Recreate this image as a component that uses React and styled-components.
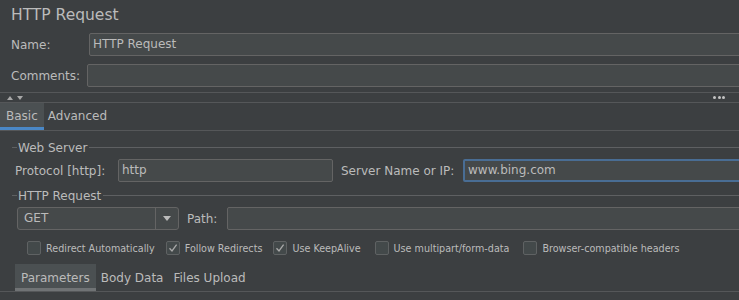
import React from "react";
import styled, { createGlobalStyle } from "styled-components";

const Global = createGlobalStyle`
  html, body { margin: 0; padding: 0; background: #3c3f41; }
  body { width: 739px; height: 300px; overflow: hidden; font-family: "DejaVu Sans", sans-serif; color: #bbbbbb; }
  * { box-sizing: border-box; }
`;

const Page = styled.div`
  width: 739px;
  height: 300px;
  overflow: hidden;
  display: flex;
  flex-direction: column;
`;

const Title = styled.div`
  height: 33px;
  padding: 5px 0 0 11px;
  font-size: 15.5px;
  line-height: 20px;
  color: #bbbbbb;
`;

const Row = styled.div`
  display: flex;
  align-items: center;
  height: ${(p) => p.$h || 23}px;
  margin-top: ${(p) => p.$mt || 0}px;
  padding-left: ${(p) => p.$pl || 0}px;
`;

const Label = styled.div`
  width: ${(p) => p.$w}px;
  flex: none;
  font-size: 12px;
  white-space: nowrap;
  color: #bbbbbb;
`;

const Input = styled.div`
  height: 23px;
  width: ${(p) => (p.$w ? `${p.$w}px` : "auto")};
  flex: ${(p) => (p.$w ? "none" : "1")};
  margin-right: ${(p) => (p.$w ? 0 : -6)}px;
  background: #45494a;
  border: ${(p) => (p.$focus ? "2px solid #496d94" : "1px solid #646464")};
  border-radius: 2px;
  font-size: 12px;
  line-height: ${(p) => (p.$focus ? 19 : 21)}px;
  padding-left: 3px;
  color: #bbbbbb;
  white-space: nowrap;
`;

const Divider = styled.div`
  height: 1px;
  background: #555759;
  margin-top: ${(p) => p.$mt || 0}px;
`;

const Splitter = styled.div`
  height: 9px;
  display: flex;
  align-items: center;
  padding: 0 0 0 7px;
`;

const Arrow = styled.span`
  width: 0;
  height: 0;
  border-left: 3.5px solid transparent;
  border-right: 3.5px solid transparent;
  ${(p) =>
    p.$up
      ? "border-bottom: 4px solid #a8a8a8;"
      : "border-top: 4px solid #a8a8a8;"}
  margin-right: ${(p) => p.$mr || 0}px;
`;

const Dots = styled.div`
  margin-left: auto;
  margin-right: 14px;
  display: flex;
  gap: 1.5px;
`;

const Dot = styled.span`
  width: 3px;
  height: 3px;
  border-radius: 50%;
  background: #c4c4c4;
`;

const TabStrip = styled.div`
  display: flex;
  height: 28px;
  border-bottom: 1px solid #555759;
  padding-left: ${(p) => p.$pl || 0}px;
  margin-top: ${(p) => p.$mt || 0}px;
`;

const Tab = styled.div`
  height: 27px;
  padding: 0 ${(p) => p.$px ?? 6}px;
  font-size: 12px;
  line-height: ${(p) => p.$lh || 26}px;
  color: #bbbbbb;
  background: ${(p) => (p.$active ? "#4b5052" : "transparent")};
  border-bottom: 3px solid ${(p) => (p.$active ? p.$line : "transparent")};
`;

const Legend = styled.div`
  display: flex;
  align-items: center;
  height: 15px;
  margin-top: ${(p) => p.$mt || 0}px;
  padding-left: 12px;
  font-size: 12px;
  &::before {
    content: "";
    width: 5px;
    height: 1px;
    background: #5e6062;
    margin-right: 1px;
  }
  &::after {
    content: "";
    flex: 1;
    height: 1px;
    background: #5e6062;
    margin-left: 2px;
  }
`;

const Combo = styled.div`
  width: 162px;
  height: 23px;
  flex: none;
  display: flex;
  border: 1px solid #646464;
  border-radius: 3px;
  background: #45494a;
  font-size: 12px;
`;

const ComboText = styled.div`
  flex: 1;
  line-height: 21px;
  padding-left: 6px;
  border-right: 1px solid #646464;
`;

const ComboButton = styled.div`
  width: 22px;
  display: flex;
  align-items: center;
  justify-content: center;
  &::after {
    content: "";
    border-left: 4px solid transparent;
    border-right: 4px solid transparent;
    border-top: 5px solid #bbbbbb;
  }
`;

const Checks = styled.div`
  display: flex;
  align-items: center;
  height: 14px;
  margin-top: 11px;
  padding-left: 27px;
`;

const Check = styled.div`
  display: flex;
  align-items: center;
  margin-right: ${(p) => p.$mr}px;
  font-size: 9.6px;
  white-space: nowrap;
  color: #bbbbbb;
`;

const Box = styled.span`
  width: 14px;
  height: 14px;
  border: 1px solid #5f6263;
  border-radius: 2px;
  background: #43494a;
  margin-right: 5px;
  display: flex;
  align-items: center;
  justify-content: center;
`;

const CheckMark = () => (
  <svg width="10" height="10" viewBox="0 0 10 10">
    <path d="M1.5 5.2 L4 8 L8.6 1.6" fill="none" stroke="#a9a9a9" strokeWidth="1.3" />
  </svg>
);

const checks = [
  { label: "Redirect Automatically", on: false, mr: 11 },
  { label: "Follow Redirects", on: true, mr: 11 },
  { label: "Use KeepAlive", on: true, mr: 14 },
  { label: "Use multipart/form-data", on: false, mr: 14 },
  { label: "Browser-compatible headers", on: false, mr: 0 },
];

export default function App() {
  return (
    <Page>
      <Global />
      <Title>HTTP Request</Title>
      <Row $pl={11}>
        <Label $w={78}>Name:</Label>
        <Input>HTTP Request</Input>
      </Row>
      <Row $pl={11} $mt={8}>
        <Label $w={76}>Comments:</Label>
        <Input />
      </Row>
      <Divider $mt={5} />
      <Splitter>
        <Arrow $up $mr={4} />
        <Arrow />
        <Dots>
          <Dot />
          <Dot />
          <Dot />
        </Dots>
      </Splitter>
      <Divider />
      <TabStrip>
        <Tab $active $line="#4a88c7">Basic</Tab>
        <Tab $px={4}>Advanced</Tab>
      </TabStrip>
      <Legend $mt={9}>Web Server</Legend>
      <Row $pl={15} $mt={4}>
        <Label $w={103}>Protocol [http]:</Label>
        <Input $w={215}>http</Input>
        <Label $w={122} style={{ marginLeft: 8 }}>Server Name or IP:</Label>
        <Input $focus>www.bing.com</Input>
      </Row>
      <Legend $mt={6}>HTTP Request</Legend>
      <Row $pl={17} $mt={4}>
        <Combo>
          <ComboText>GET</ComboText>
          <ComboButton />
        </Combo>
        <Label $w={40} style={{ marginLeft: 8 }}>Path:</Label>
        <Input />
      </Row>
      <Checks>
        {checks.map((c) => (
          <Check key={c.label} $mr={c.mr}>
            <Box>{c.on && <CheckMark />}</Box>
            {c.label}
          </Check>
        ))}
      </Checks>
      <TabStrip $pl={15} $mt={9}>
        <Tab $active $line="#707375" $lh={29}>Parameters</Tab>
        <Tab $px={5} $lh={29}>Body Data</Tab>
        <Tab $px={5} $lh={29}>Files Upload</Tab>
      </TabStrip>
    </Page>
  );
}
